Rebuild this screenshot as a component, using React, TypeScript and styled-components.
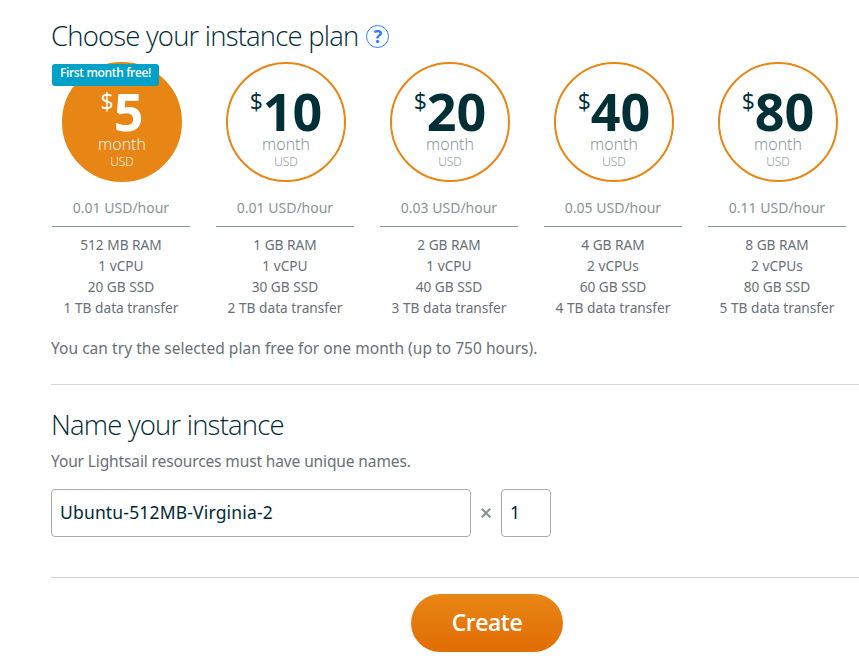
import React from 'react';
import styled, { createGlobalStyle } from 'styled-components';

const GlobalStyle = createGlobalStyle`
  * { box-sizing: border-box; }
  body {
    margin: 0;
    background: #fff;
    color: #687078;
    font-family: "Noto Sans", "Open Sans", sans-serif;
    overflow: hidden;
  }
`;

const Page = styled.main`
  width: 859px;
  height: 672px;
  padding-left: 51px;
  overflow: hidden;
`;

const Section = styled.section<{ $height: number; $top: number }>`
  height: ${(p) => p.$height}px;
  padding-top: ${(p) => p.$top}px;
  border-bottom: 1px solid #d5d5d5;
`;

const Heading = styled.h2`
  display: flex;
  align-items: center;
  gap: 8px;
  height: 36px;
  margin: 0;
  color: #002b36;
  font-family: "Open Sans", sans-serif;
  font-size: 27.5px;
  font-weight: 300;
  letter-spacing: -0.8px;
  line-height: 36px;
  white-space: nowrap;
`;

const Help = styled.span`
  display: flex;
  align-items: center;
  justify-content: center;
  width: 23px;
  height: 23px;
  border: 1px solid #2e7df6;
  border-radius: 50%;
  color: #2e7df6;
  font-size: 18px;
  font-weight: 700;
  letter-spacing: 0;
  line-height: 20px;
  padding-bottom: 1px;
`;

const Plans = styled.div`
  display: flex;
  gap: 26px;
  padding: 8px 0 0 1px;
`;

const Plan = styled.div`
  flex: 0 0 138px;
  display: flex;
  flex-direction: column;
  align-items: center;
  position: relative;
`;

const Badge = styled.span`
  position: absolute;
  top: 2px;
  left: 0;
  width: 107px;
  height: 22px;
  border-radius: 3px;
  background: #00a1c9;
  color: #fff;
  font-family: "Open Sans", sans-serif;
  font-size: 12px;
  font-weight: 600;
  letter-spacing: -0.37px;
  line-height: 18px;
  text-align: center;
  white-space: nowrap;
`;

const Circle = styled.div<{ $selected?: boolean }>`
  width: 120px;
  height: 120px;
  margin-left: 2px;
  padding-top: 22px;
  border: 2px solid #e88615;
  border-radius: 50%;
  background: ${(p) => (p.$selected ? '#e88615' : '#fff')};
  color: ${(p) => (p.$selected ? '#fff' : '#7d8c8e')};
  text-align: center;
  font-family: "Open Sans", sans-serif;
  font-weight: ${(p) => (p.$selected ? 350 : 300)};
`;

const Price = styled.div<{ $selected?: boolean }>`
  display: flex;
  justify-content: center;
  height: 50px;
  color: ${(p) => (p.$selected ? '#fff' : '#002f36')};
`;

const Currency = styled.span`
  font-size: 23px;
  font-weight: 400;
  line-height: 30px;
`;

const Amount = styled.strong`
  font-size: 52px;
  font-weight: 700;
  line-height: 49px;
`;

const Month = styled.div`
  font-size: 16px;
  line-height: 17px;
`;

const Usd = styled.div`
  font-size: 12px;
  line-height: 18px;
`;

const Hourly = styled.div`
  width: 138px;
  height: 45px;
  padding-top: 15px;
  border-bottom: 1px solid #879596;
  color: #879596;
  font-size: 14px;
  line-height: 21px;
  text-align: center;
`;

const Specs = styled.ul`
  margin: 7px 0 0;
  padding: 0;
  list-style: none;
  font-size: 13.7px;
  line-height: 21px;
  text-align: center;
  white-space: nowrap;
`;

const Note = styled.p<{ $top: number; $spacing: number }>`
  margin: ${(p) => p.$top}px 0 0;
  font-size: 15.5px;
  letter-spacing: ${(p) => p.$spacing}px;
  line-height: 24px;
`;

const Fields = styled.div`
  display: flex;
  align-items: center;
  margin-top: 16px;
`;

const Field = styled.input<{ $width: number }>`
  width: ${(p) => p.$width}px;
  height: 48px;
  padding: 0 8px 2px;
  border: 1px solid #aaa;
  border-radius: 4px;
  outline: none;
  background: #fff;
  color: #002b36;
  font-family: "Noto Sans", sans-serif;
  font-size: 17.5px;
  letter-spacing: 0.17px;
`;

const Times = styled.svg`
  flex: none;
  margin: 0 10px;
`;

const CreateButton = styled.button`
  display: block;
  width: 152px;
  height: 58px;
  margin: 16px 0 0 360px;
  padding: 0 0 2px;
  border: 0;
  border-radius: 29px;
  background: linear-gradient(#e88615, #e16d05);
  color: #fff;
  font-family: "Open Sans", sans-serif;
  font-size: 23px;
  font-weight: 600;
  letter-spacing: -0.5px;
  line-height: 56px;
`;

const plans = [
  { price: 5, hourly: '0.01', specs: ['512 MB RAM', '1 vCPU', '20 GB SSD', '1 TB data transfer'] },
  { price: 10, hourly: '0.01', specs: ['1 GB RAM', '1 vCPU', '30 GB SSD', '2 TB data transfer'] },
  { price: 20, hourly: '0.03', specs: ['2 GB RAM', '1 vCPU', '40 GB SSD', '3 TB data transfer'] },
  { price: 40, hourly: '0.05', specs: ['4 GB RAM', '2 vCPUs', '60 GB SSD', '4 TB data transfer'] },
  { price: 80, hourly: '0.11', specs: ['8 GB RAM', '2 vCPUs', '80 GB SSD', '5 TB data transfer'] },
];

export default function App() {
  return (
    <Page>
      <GlobalStyle />
      <Section $height={385} $top={18}>
        <Heading>
          Choose your instance plan <Help>?</Help>
        </Heading>
        <Plans>
          {plans.map((plan, i) => (
            <Plan key={plan.price}>
              <Circle $selected={i === 0}>
                <Price $selected={i === 0}>
                  <Currency>$</Currency>
                  <Amount>{plan.price}</Amount>
                </Price>
                <Month>month</Month>
                <Usd>USD</Usd>
              </Circle>
              {i === 0 && <Badge>First month free!</Badge>}
              <Hourly>{plan.hourly} USD/hour</Hourly>
              <Specs>
                {plan.specs.map((spec) => (
                  <li key={spec}>{spec}</li>
                ))}
              </Specs>
            </Plan>
          ))}
        </Plans>
        <Note $top={18} $spacing={0.04}>
          You can try the selected plan free for one month (up to 750 hours).
        </Note>
      </Section>
      <Section $height={193} $top={22}>
        <Heading>Name your instance</Heading>
        <Note $top={6} $spacing={-0.12}>Your Lightsail resources must have unique names.</Note>
        <Fields>
          <Field $width={420} defaultValue="Ubuntu-512MB-Virginia-2" />
          <Times width="10" height="10" viewBox="0 0 10 10" stroke="#879596" strokeWidth="2.1">
            <path d="M.8.8l8.4 8.4M9.2.8L.8 9.2" />
          </Times>
          <Field $width={50} defaultValue="1" />
        </Fields>
      </Section>
      <CreateButton>Create</CreateButton>
    </Page>
  );
}
